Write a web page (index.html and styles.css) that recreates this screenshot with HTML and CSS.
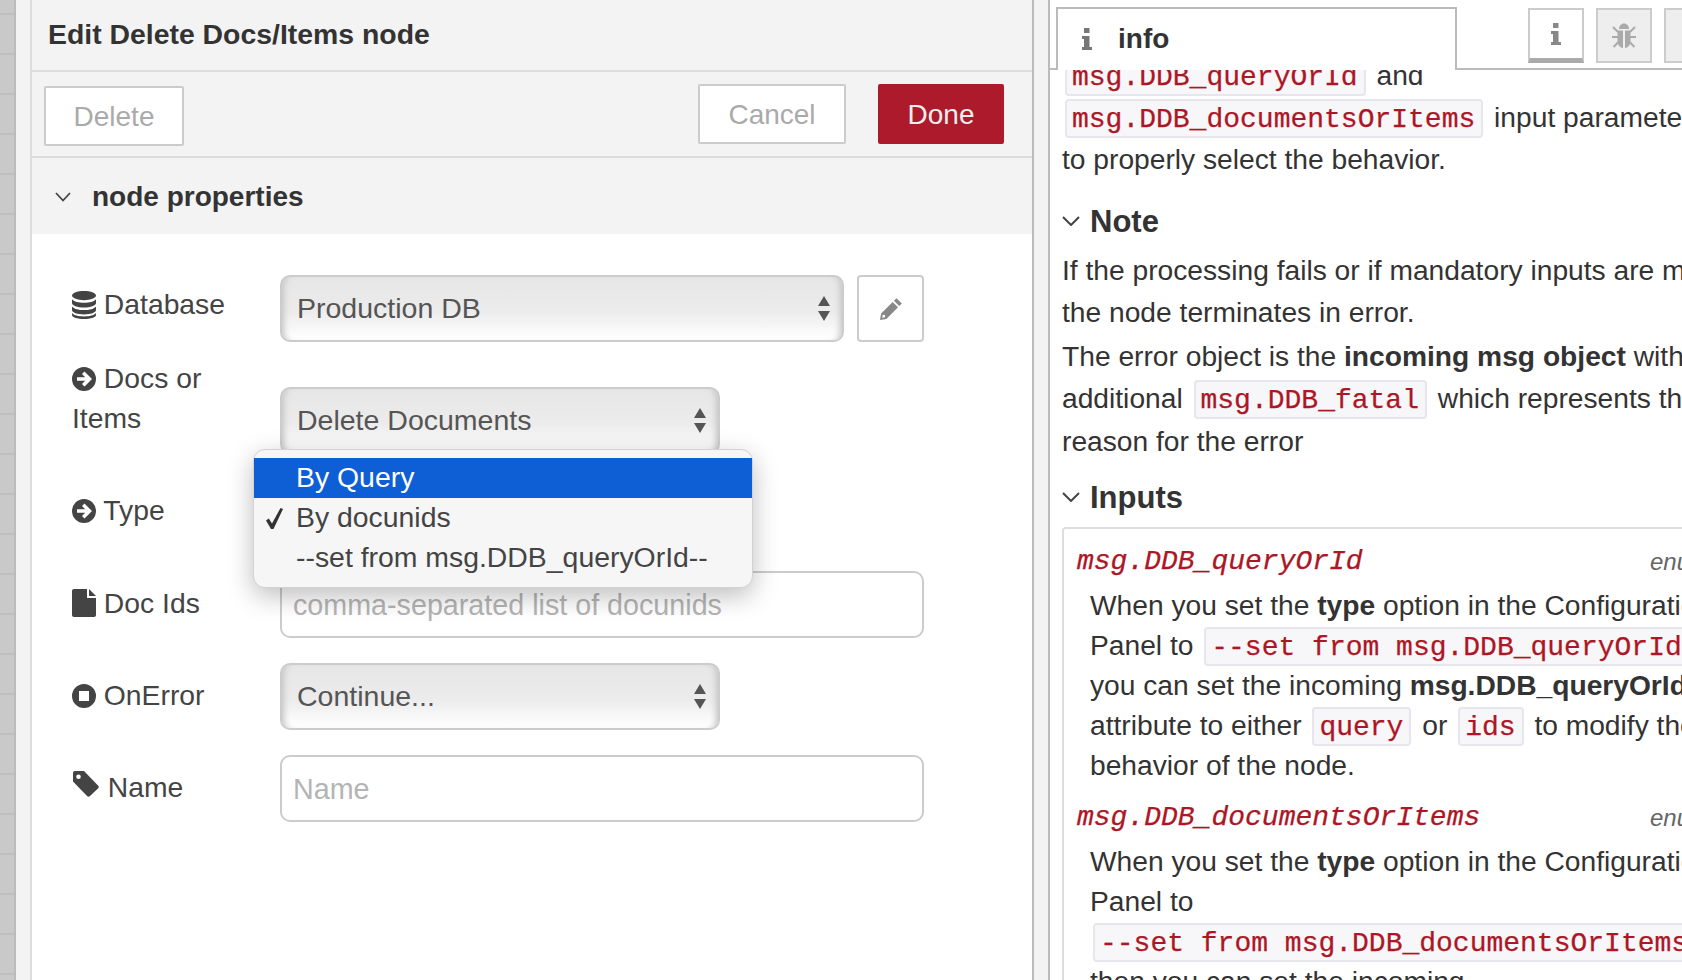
FILE: index.html
```html
<!DOCTYPE html>
<html lang="en">
<head>
<meta charset="utf-8">
<title>Edit Delete Docs/Items node</title>
<link rel="stylesheet" href="styles.css">
</head>
<body>
<div class="page">
  <div class="canvas-strip"></div>
  <div class="tray-gutter"></div>
  <main class="tray">
    <header class="tray-title">Edit Delete Docs/Items node</header>
    <div class="tray-actions">
      <button class="btn btn-delete">Delete</button>
      <div class="tray-actions-right">
        <button class="btn">Cancel</button>
        <button class="btn btn-primary">Done</button>
      </div>
    </div>
    <div class="section-head">
      <svg class="chevron-sm" viewBox="0 0 16 10"><polyline points="1,1 8,8.5 15,1"/></svg>
      <span>node properties</span>
    </div>
    <form class="form">
      <div class="row row-first">
        <label class="label label-db">
          <svg class="ico" viewBox="0 0 24 28"><path d="M12 0C5.4 0 0 2 0 4.6S5.4 9.2 12 9.200S24 7.200 24 4.600S18.600 0 12 0Z"/><path d="M0 8.200C1.800 10.600 6.600 11.800 12 11.800S22.200 10.600 24 8.200V12C24 14.600 18.600 16.600 12 16.600S0 14.600 0 12Z"/><path d="M0 15.400C1.800 17.800 6.600 19 12 19S22.200 17.800 24 15.400V19C24 21.600 18.600 23.400 12 23.400S0 21.600 0 19Z"/><path d="M0 22C1.800 24.400 6.600 25.400 12 25.400S22.200 24.400 24 22V24C24 26.400 18.600 28 12 28S0 26.400 0 24Z"/></svg>
          Database
        </label>
        <div class="select select-wide">
          <span>Production DB</span>
          <svg class="updown" viewBox="0 0 12 26"><path d="M6 0L12 10H0Z"/><path d="M0 15H12L6 25Z"/></svg>
        </div>
        <button type="button" class="edit-btn" aria-label="Edit">
          <svg class="pencil" viewBox="0 0 24 24"><path d="M17.500 1.200L22.800 6.500L20.200 9.100L14.900 3.800Z"/><path d="M13.700 5L19 10.300L7.400 21.900L1 23L2.100 16.600ZM3.700 17.800L3.200 20.800L6.200 20.300L5.900 18.100Z" fill-rule="evenodd"/></svg>
        </button>
      </div>
      <div class="row row-tall">
        <label class="label label-tall">
          <svg class="ico" viewBox="0 0 24 24"><path fill-rule="evenodd" d="M12 0A12 12 0 1 1 12 24A12 12 0 1 1 12 0ZM12.500 4.500L10 7L13.200 10.200H5V13.800H13.200L10 17L12.500 19.500L20 12Z"/></svg>
          Docs or Items
        </label>
        <div class="select select-narrow select-tall">
          <span>Delete Documents</span>
          <svg class="updown" viewBox="0 0 12 26"><path d="M6 0L12 10H0Z"/><path d="M0 15H12L6 25Z"/></svg>
        </div>
      </div>
      <div class="row">
        <label class="label label-type">
          <svg class="ico" viewBox="0 0 24 24"><path fill-rule="evenodd" d="M12 0A12 12 0 1 1 12 24A12 12 0 1 1 12 0ZM12.500 4.500L10 7L13.200 10.200H5V13.800H13.200L10 17L12.500 19.500L20 12Z"/></svg>
          Type
        </label>
        <div class="select-wrap">
          <div class="select select-narrow select-covered">
            <svg class="updown" viewBox="0 0 12 26"><path d="M6 0L12 10H0Z"/><path d="M0 15H12L6 25Z"/></svg>
          </div>
          <ul class="menu">
            <li class="menu-item menu-item-active"><span class="check"></span>By Query</li>
            <li class="menu-item"><span class="check"><svg class="check-mark" viewBox="0 0 17 21"><path d="M0 12.500L2.800 10.500L6 15.500L14.500 0L17 1L7.500 21H5Z"/></svg></span>By docunids</li>
            <li class="menu-item"><span class="check"></span>--set from msg.DDB_queryOrId--</li>
          </ul>
        </div>
      </div>
      <div class="row">
        <label class="label">
          <svg class="ico ico-file" viewBox="0 0 24 28"><path d="M15 0V9H24V26C24 27.200 23.200 28 22 28H2C.8 28 0 27.200 0 26V2C0 .8 .8 0 2 0Z"/><path d="M17 0L24 7H17Z"/></svg>
          Doc Ids
        </label>
        <input class="input" type="text" placeholder="comma-separated list of docunids">
      </div>
      <div class="row">
        <label class="label">
          <svg class="ico" viewBox="0 0 24 24"><path fill-rule="evenodd" d="M12 0A12 12 0 1 1 12 24A12 12 0 1 1 12 0ZM7 7V17H17V7Z"/></svg>
          OnError
        </label>
        <div class="select select-narrow">
          <span>Continue...</span>
          <svg class="updown" viewBox="0 0 12 26"><path d="M6 0L12 10H0Z"/><path d="M0 15H12L6 25Z"/></svg>
        </div>
      </div>
      <div class="row">
        <label class="label">
          <svg class="ico ico-tag" viewBox="0 0 26 26"><path fill-rule="evenodd" d="M2 0H11L25 14.500C26 15.500 26 16.500 25 17.500L17 25C16 26 15 26 14 25L0 10.500V2C0 .8 .8 0 2 0ZM5.500 3.500A2.300 2.300 0 1 0 5.510 8.100A2.300 2.300 0 1 0 5.500 3.500Z"/></svg>
          Name
        </label>
        <input class="input" type="text" placeholder="Name">
      </div>
    </form>
  </main>
  <div class="tray-gap"></div>
  <aside class="sidebar">
    <div class="side-head">
      <div class="tab-stub"></div>
      <div class="tab">
        <svg class="ico-info" viewBox="0 0 10 22"><path d="M2 0H7.500V5H2Z"/><path d="M0 8H7.500V19H10V22H0V19H2V11H0Z"/></svg>
        <span>info</span>
      </div>
      <div class="side-tools">
        <button class="tool tool-active" aria-label="info"><svg class="ico-info" viewBox="0 0 10 22"><path d="M2 0H7.500V5H2Z"/><path d="M0 8H7.500V19H10V22H0V19H2V11H0Z"/></svg></button>
        <button class="tool" aria-label="debug"><svg class="ico-bug" viewBox="0 0 24 26"><path d="M7 6C7 3 9 0.500 12 0.500S17 3 17 6Z"/><path d="M5.500 7.500H11V25C7.500 24.500 5.500 21.500 5.500 18Z"/><path d="M13 7.500H18.500V18C18.500 21.500 16.500 24.500 13 25Z"/><path d="M1 4L6 9M23 4L18 9M0 14H6M24 14H18M1.500 24L6.500 19M22.500 24L17.500 19" fill="none" stroke-width="2"/></svg></button>
        <button class="tool" aria-label="config"><svg class="ico-cog" viewBox="0 0 24 24"><circle cx="12" cy="12" r="12"/></svg></button>
      </div>
    </div>
    <div class="help">
      <div class="help-inner">
        <div class="line"><code>msg.DDB_queryOrId</code> and</div>
        <div class="line"><code>msg.DDB_documentsOrItems</code> input parameters</div>
        <div class="line">to properly select the behavior.</div>
        <h3 class="help-h help-note"><svg class="chevron" viewBox="0 0 18 10"><polyline points="1,1 9,9 17,1"/></svg>Note</h3>
        <div class="line line-if">If the processing fails or if mandatory inputs are missing,</div>
        <div class="line">the node terminates in error.</div>
        <div class="line line-gap">The error object is the <strong>incoming msg object</strong> with an</div>
        <div class="line">additional <code>msg.DDB_fatal</code> which represents the</div>
        <div class="line line-nudge">reason for the error</div>
        <h3 class="help-h help-inputs"><svg class="chevron" viewBox="0 0 18 10"><polyline points="1,1 9,9 17,1"/></svg>Inputs</h3>
        <div class="props">
          <div class="prop-head"><span class="prop-name">msg.DDB_queryOrId</span><span class="prop-type">enum</span></div>
          <div class="prop-body">
            <div class="pline">When you set the <strong>type</strong> option in the Configuration</div>
            <div class="pline">Panel to <code>--set from msg.DDB_queryOrId--</code></div>
            <div class="pline">you can set the incoming <strong>msg.DDB_queryOrId</strong></div>
            <div class="pline">attribute to either <code>query</code> or <code>ids</code> to modify the</div>
            <div class="pline">behavior of the node.</div>
          </div>
          <div class="prop-head prop-head-next"><span class="prop-name">msg.DDB_documentsOrItems</span><span class="prop-type">enum</span></div>
          <div class="prop-body">
            <div class="pline">When you set the <strong>type</strong> option in the Configuration</div>
            <div class="pline">Panel to</div>
            <div class="pline"><code>--set from msg.DDB_documentsOrItems--</code></div>
            <div class="pline">then you can set the incoming</div>
          </div>
        </div>
      </div>
    </div>
  </aside>
</div>
</body>
</html>
```
FILE: styles.css
```css
* { box-sizing: border-box; }
html, body { margin: 0; height: 100%; overflow: hidden; }
body { font-family: "Liberation Sans", Arial, sans-serif; font-size: 28px; color: #333; background: #fff; }
.page { display: flex; width: 1682px; height: 980px; overflow: hidden; }

.canvas-strip {
  width: 16px; flex: none;
  border-right: 2px solid #bbb;
  background-color: #c9c9c9;
  background-image: repeating-linear-gradient(to bottom, #bfbfbf 0, #bfbfbf 2px, transparent 2px, transparent 40px);
  background-position: 0 13px;
}
.tray-gutter { width: 14px; flex: none; background: #f3f3f3; }
.tray {
  width: 1004px; flex: none; display: flex; flex-direction: column;
  border-left: 2px solid #ddd; border-right: 2px solid #bbb; background: #fff;
}
.tray-gap { width: 14px; flex: none; background: #f3f3f3; }

.tray-title {
  height: 72px; flex: none; padding: 18px 0 0 16px;
  background: #f3f3f3; border-bottom: 2px solid #ddd;
  font-size: 28.400px; font-weight: bold; line-height: 32px;
}
.tray-actions {
  height: 86px; flex: none; display: flex; justify-content: space-between; align-items: flex-start;
  padding: 12px 28px 0 12px; background: #f3f3f3; border-bottom: 2px solid #ddd;
}
.tray-actions-right { display: flex; gap: 32px; }
.btn {
  height: 60px; width: 148px; padding: 2px 0 0; font: 28px "Liberation Sans", Arial, sans-serif; color: #aaa;
  background: #fff; border: 2px solid #ccc; border-radius: 2px;
}
.btn-delete { width: 140px; margin-top: 2px; }
.btn-primary { width: 126px; color: #eee; background: #ad1a2c; border-color: #ad1a2c; }
.section-head {
  height: 76px; flex: none; display: flex; align-items: center; gap: 21px;
  padding: 2px 0 0 23px; background: #f3f3f3; font-weight: bold;
}
.chevron-sm { width: 16px; height: 10px; fill: none; stroke: #444; stroke-width: 1.800; }

.form { padding: 41px 0 0 40px; }
.row { display: flex; align-items: flex-start; margin-bottom: 25px; }
.row-first { margin-bottom: 17px; }
.label {
  width: 208px; flex: none; padding-top: 12px; font-size: 28.300px; line-height: 40px; color: #444;
}
.label-db { padding-top: 9px; }
.label-tall { padding: 0 60px 0 0; margin-top: -1px; }
.label-type { padding-top: 11px; }
.ico { width: 24px; height: 24px; fill: #444; vertical-align: -3px; }
.label-db .ico { height: 28px; vertical-align: -5px; }
.ico-file { height: 28px; vertical-align: -4px; }
.ico-tag { width: 26px; height: 26px; margin: 0 1px 0 1px; vertical-align: 0; }

.select {
  display: flex; align-items: center; justify-content: space-between;
  height: 67px; padding: 0 12px 0 15px;
  border: 2px solid #ccc; border-radius: 10px; color: #555; font-size: 28.500px;
  background: linear-gradient(to bottom, #e6e6e6 0, #ececec 55%, #fbfbfb 90%, #fff 100%);
  box-shadow: inset 7px 0 6px -5px #c4c4c4, inset -7px 0 6px -5px #c4c4c4;
}
.select span { margin-top: -1px; }
.select-wide { width: 564px; }
.select-narrow { width: 440px; }
.select-tall { margin-top: 28px; }
.select-covered { justify-content: flex-end; }
.select-wrap { position: relative; }
.updown { width: 12px; height: 26px; fill: #555; }
.edit-btn {
  width: 67px; height: 67px; margin-left: 13px; padding: 0;
  display: flex; align-items: center; justify-content: center;
  background: #fff; border: 2px solid #ccc; border-radius: 4px;
}
.pencil { width: 24px; height: 24px; fill: #888; }
.input {
  width: 644px; height: 67px; padding: 2px 11px 0 11px;
  font: 28.700px "Liberation Sans", Arial, sans-serif; color: #555;
  background: #fff; border: 2px solid #ccc; border-radius: 10px; outline: none;
}
.input::placeholder { color: #b4b4b4; opacity: 1; }

.menu {
  position: absolute; left: -27px; top: -30px; z-index: 5;
  width: 500px; height: 139px; margin: 0; padding: 8px 0; list-style: none;
  background: #f6f6f6; border: 1px solid #d2d2d2; border-radius: 12px;
  box-shadow: 0 8px 26px rgba(0, 0, 0, .26);
}
.menu-item { display: flex; height: 40px; line-height: 38px; padding-left: 12px; color: #444; font-size: 28.400px; }
.menu-item-active { background: #0e5ed6; color: #fff; }
.check { width: 30px; flex: none; display: flex; align-items: center; }
.check-mark { width: 17px; height: 21px; fill: #333; }

.sidebar { flex: 1; min-width: 0; display: flex; flex-direction: column; border-left: 2px solid #bbb; background: #fff; overflow: hidden; }
.side-head { height: 70px; flex: none; display: flex; position: relative; z-index: 2; background: #fff; }
.tab-stub { width: 6px; flex: none; height: 70px; border-bottom: 2px solid #bbb; }
.tab {
  width: 401px; flex: none; height: 63px; margin-top: 7px;
  display: flex; align-items: center; padding: 0 0 2px 24px; gap: 26px;
  background: #fff; border: 2px solid #bbb; border-bottom: 0; font-weight: bold;
}
.ico-info { width: 10px; height: 22px; fill: #777; flex: none; }
.side-tools { flex: 1; height: 70px; display: flex; gap: 12px; padding: 8px 0 0 71px; border-bottom: 2px solid #bbb; }
.tool {
  width: 56px; height: 55px; flex: none; padding: 0; display: flex; align-items: center; justify-content: center;
  background: #eee; border: 2px solid #ccc;
}
.tool-active { background: #fff; border-bottom: 5px solid #aaa; }
.tool .ico-info { fill: #888; }
.ico-bug { width: 24px; height: 26px; fill: #aaa; stroke: #aaa; stroke-width: 0; }
.ico-bug path:last-child { stroke-width: 2; }
.ico-cog { width: 16px; height: 16px; fill: #999; }

.help { flex: 1; min-height: 0; overflow: hidden; padding-left: 12px; font-size: 28.200px; }
.help-inner { margin-top: -16px; width: 700px; }
.line { height: 42px; line-height: 42px; white-space: nowrap; }
.line-if { margin-top: 5px; }
.line-gap { margin-top: 2px; }
.line-nudge { margin-top: 1px; }
code {
  font-family: "Liberation Mono", "Courier New", monospace; font-size: 28px; line-height: 1;
  color: #ad1625; background: #f7f7f9; border: 2px solid #e6e6ec; border-radius: 4px;
  padding: 3px 6px 1px 5px; margin: 0 3px;
  -webkit-text-stroke: .25px #ad1625;
}
.help-h { display: flex; align-items: center; height: 44px; margin: 0; font-size: 31px; line-height: 44px; font-weight: bold; color: #333; }
.help-note { margin-top: 20px; }
.help-inputs { margin-top: 14px; }
.chevron { width: 18px; height: 10px; margin-right: 10px; fill: none; stroke: #444; stroke-width: 2; flex: none; margin-top: -2px; }

.props { width: 700px; margin-top: 7px; padding: 13px 0 0 13px; border: 2px solid #ddd; border-radius: 4px; }
.prop-head { display: flex; justify-content: space-between; width: 633px; height: 40px; line-height: 40px; }
.prop-head-next { margin-top: 13px; }
.prop-name { font-family: "Liberation Mono", "Courier New", monospace; font-size: 28px; font-style: italic; color: #ad1625; -webkit-text-stroke: .25px #ad1625; }
.prop-type { font-size: 24px; font-style: italic; color: #666; }
.prop-body { margin-top: 3px; padding-left: 13px; }
.pline { height: 40px; line-height: 40px; white-space: nowrap; }
```
